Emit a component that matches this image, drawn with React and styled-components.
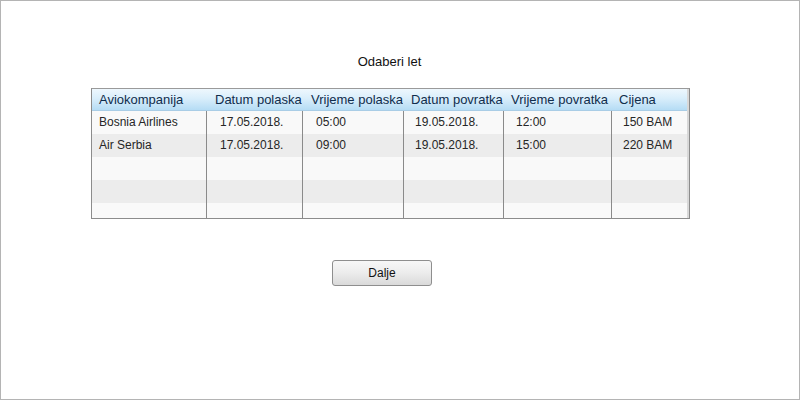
import React from 'react'
import styled, { createGlobalStyle } from 'styled-components'

const GlobalStyle = createGlobalStyle`
  html, body {
    margin: 0;
    padding: 0;
    background: #fff;
  }
  body {
    font-family: Arial, "Liberation Sans", sans-serif;
  }
`

const Frame = styled.div`
  box-sizing: border-box;
  width: 800px;
  height: 400px;
  border: 1px solid #b4b4b4;
  display: flex;
  flex-direction: column;
  align-items: center;
  padding-top: 53px;
`

const Title = styled.div`
  font-size: 13px;
  color: #111;
  line-height: 15px;
  margin-left: -21px;
`

const TableBox = styled.div`
  box-sizing: border-box;
  margin-top: 19px;
  margin-left: -19px;
  width: 599px;
  height: 131px;
  border: 1px solid #8c8c8c;
  border-top-color: #9a9a9a;
  overflow: hidden;
  background: #f9f9f9;
  box-shadow: inset -2px -2px 0 #d8d8d8;
`

const Grid = styled.div`
  display: grid;
  grid-template-columns: 114px 96px 101px 100px 108px 76px;
`

const HeadCell = styled.div`
  height: 22px;
  line-height: 22px;
  font-size: 13px;
  color: #102d4c;
  padding-left: ${p => p.$pad}px;
  white-space: nowrap;
  background: linear-gradient(to bottom, #eef7fd 0%, #d9eefb 45%, #b5dcf5 100%);
  border-bottom: 1px solid #a9cde6;
  box-sizing: border-box;
`

const Cell = styled.div`
  height: 23px;
  line-height: 23px;
  font-size: 12px;
  color: #262626;
  padding-left: ${p => p.$pad}px;
  white-space: nowrap;
  background: ${p => (p.$odd ? '#ececec' : '#f9f9f9')};
  border-left: ${p => (p.$first ? 'none' : '1px solid #8a8a8a')};
  box-sizing: border-box;
`

const Button = styled.button`
  margin-top: 41px;
  margin-left: -36px;
  width: 100px;
  height: 26px;
  border: 1px solid #8e8e8e;
  border-radius: 3px;
  background: linear-gradient(to bottom, #f7f7f7 0%, #ececec 50%, #dadada 100%);
  font-family: Arial, "Liberation Sans", sans-serif;
  font-size: 12px;
  color: #111;
  padding: 0;
`

const columns = [
  { title: 'Aviokompanija', hp: 7, bp: 7 },
  { title: 'Datum polaska', hp: 9, bp: 13 },
  { title: 'Vrijeme polaska', hp: 9, bp: 13 },
  { title: 'Datum povratka', hp: 8, bp: 11 },
  { title: 'Vrijeme povratka', hp: 8, bp: 12 },
  { title: 'Cijena', hp: 8, bp: 11 }
]

const rows = [
  ['Bosnia Airlines', '17.05.2018.', '05:00', '19.05.2018.', '12:00', '150 BAM'],
  ['Air Serbia', '17.05.2018.', '09:00', '19.05.2018.', '15:00', '220 BAM'],
  ['', '', '', '', '', ''],
  ['', '', '', '', '', ''],
  ['', '', '', '', '', '']
]

const App = () => {
  return (
    <>
      <GlobalStyle />
      <Frame>
        <Title>Odaberi let</Title>
        <TableBox>
          <Grid>
            {columns.map((c, i) => (
              <HeadCell key={i} $pad={c.hp}>
                {c.title}
              </HeadCell>
            ))}
            {rows.map((row, r) =>
              row.map((val, i) => (
                <Cell
                  key={r + '-' + i}
                  $pad={columns[i].bp}
                  $odd={r % 2 === 1}
                  $first={i === 0}
                >
                  {val}
                </Cell>
              ))
            )}
          </Grid>
        </TableBox>
        <Button>Dalje</Button>
      </Frame>
    </>
  )
}

export default App
